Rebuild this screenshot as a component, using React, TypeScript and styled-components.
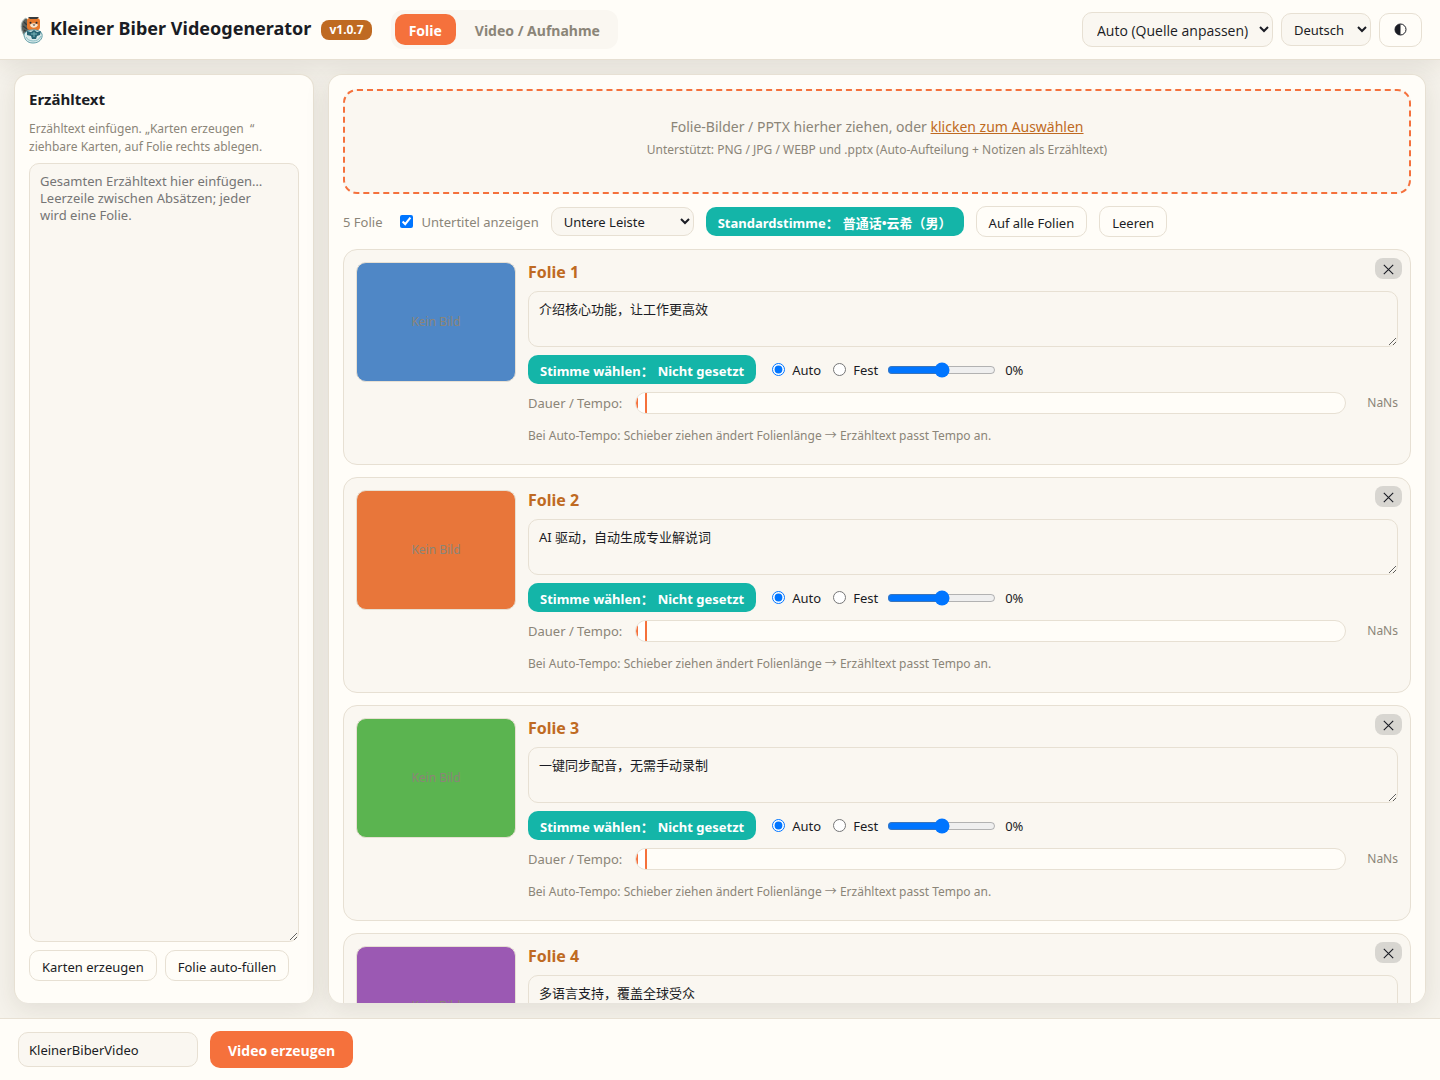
import React from "react";
import styled, { createGlobalStyle, css } from "styled-components";

const c = {
  page: "#f5f2eb",
  panel: "#fffdf8",
  soft: "#faf7f1",
  line: "#e7e0d3",
  text: "#1a1c24",
  muted: "#8b8578",
  brown: "#bf6a22",
  orange: "#f5713c",
  teal: "#14b5a8",
};

const Global = createGlobalStyle`
  *, *::before, *::after { box-sizing: border-box; }
  body {
    margin: 0;
    background: ${c.page};
    color: ${c.text};
    font: 13px/18px "Noto Sans", "Noto Sans CJK SC", sans-serif;
  }
  button, input, select, textarea { font: inherit; color: inherit; }
  h1, h2, h3, p { margin: 0; }
`;

const Page = styled.div`
  display: flex;
  flex-direction: column;
  height: 100vh;
`;

const Header = styled.header`
  display: flex;
  align-items: center;
  height: 60px;
  padding: 0 18px;
  background: ${c.panel};
  border-bottom: 1px solid ${c.line};
  box-shadow: 0 6px 24px rgba(60, 50, 30, 0.1);
`;

const Brand = styled.h1`
  display: flex;
  align-items: center;
  gap: 4px;
  font-size: 18px;
  font-weight: 700;
  line-height: 24px;
  white-space: nowrap;
  span { padding-bottom: 3px; }
`;

const Version = styled.span`
  margin-left: 10px;
  padding: 0 8px;
  border-radius: 8px;
  background: ${c.brown};
  color: #fff;
  font-size: 12px;
  font-weight: 700;
  line-height: 20px;
`;

const Tabs = styled.nav`
  display: flex;
  margin-left: 19px;
  padding: 4px;
  gap: 5px;
  border-radius: 12px;
  background: ${c.soft};
`;

const Tab = styled.button<{ $active?: boolean }>`
  height: 31px;
  padding: 2px 14px 0;
  border: 0;
  border-radius: 10px;
  font-size: 14px;
  font-weight: 700;
  background: ${(p) => (p.$active ? c.orange : "transparent")};
  color: ${(p) => (p.$active ? "#fff" : c.muted)};
`;

const HeaderActions = styled.div`
  display: flex;
  align-items: center;
  gap: 8px;
  margin-left: auto;
`;

const Select = styled.select<{ $h: number; $w: number }>`
  width: ${(p) => p.$w}px;
  height: ${(p) => p.$h}px;
  padding: 1px 0 0 8px;
  border: 1px solid ${c.line};
  border-radius: 10px;
  background: ${c.soft};
`;

const FormatSelect = styled(Select)`
  padding-left: 10px;
  font-family: "Open Sans", sans-serif;
  font-size: 14px;
`;

const outline = css`
  border: 1px solid ${c.line};
  border-radius: 10px;
  background: ${c.panel};
`;

const Button = styled.button`
  ${outline}
  height: 31px;
  padding: 2px 12px 0;
  white-space: nowrap;
`;

const ThemeButton = styled.button`
  ${outline}
  display: grid;
  place-items: center;
  width: 43px;
  height: 34px;
  padding: 0;
`;

const Main = styled.main`
  display: grid;
  grid-template-columns: 300px minmax(0, 1fr);
  gap: 14px;
  flex: 1;
  min-height: 0;
  padding: 14px 14px 15px;
`;

const Panel = styled.section`
  display: flex;
  flex-direction: column;
  min-height: 0;
  padding: 14px;
  border: 1px solid ${c.line};
  border-bottom: 0;
  border-radius: 14px;
  background: ${c.panel};
  box-shadow: 0 6px 24px rgba(60, 50, 30, 0.1);
`;

const DeckPanel = styled(Panel)`
  gap: 12px;
  overflow-y: auto;
  scrollbar-width: none;
`;

const PanelTitle = styled.h2`
  font-size: 15px;
  font-weight: 700;
  line-height: 20px;
`;

const Hint = styled.p`
  color: ${c.muted};
  font-size: 12px;
  line-height: 18px;
`;

const PanelHint = styled(Hint)`
  margin: 11px 0 7px;
`;

const Area = styled.textarea`
  display: block;
  width: 100%;
  padding: 9px 10px;
  border: 1px solid ${c.line};
  border-radius: 10px;
  background: ${c.soft};
  line-height: 17px;
  resize: vertical;
  &::placeholder { color: #757575; }
`;

const Script = styled(Area)`
  flex: 1;
  resize: both;
`;

const SlideArea = styled(Area)`
  height: 56px;
`;

const ScriptActions = styled.div`
  display: flex;
  gap: 8px;
  padding: 8px 0;
`;

const Drop = styled.div`
  display: flex;
  flex-direction: column;
  align-items: center;
  flex: none;
  gap: 4px;
  padding: 25px 0 33px;
  border: 2px dashed ${c.orange};
  border-radius: 14px;
  background: ${c.soft};
  color: ${c.muted};
  font-size: 14px;
  line-height: 21px;
  a { color: ${c.brown}; text-decoration: underline; }
`;

const Toolbar = styled.div`
  display: flex;
  align-items: center;
  flex: none;
  gap: 12px;
  color: ${c.muted};
  ${Select}, ${Button} { color: ${c.text}; }
`;

const Check = styled.label`
  display: flex;
  align-items: center;
  gap: 8px;
  input { width: 13px; height: 13px; margin: 0 0 0 6px; }
`;

const VoiceButton = styled.button`
  display: flex;
  align-items: center;
  gap: 4px;
  height: 29px;
  padding: 2px 12px 0;
  border: 0;
  border-radius: 10px;
  background: ${c.teal};
  color: #fff;
  font-weight: 700;
  white-space: nowrap;
`;

const Card = styled.article`
  position: relative;
  display: flex;
  flex: none;
  gap: 12px;
  min-height: 216px;
  padding: 12px;
  border: 1px solid ${c.line};
  border-radius: 14px;
  background: ${c.soft};
`;

const Thumb = styled.div<{ $fill: string }>`
  display: grid;
  place-items: center;
  flex: none;
  width: 160px;
  height: 120px;
  border: 1px solid ${c.line};
  border-radius: 10px;
  background: ${(p) => p.$fill};
  color: ${c.muted};
  font-size: 12px;
`;

const CardBody = styled.div`
  display: flex;
  flex-direction: column;
  flex: 1;
  gap: 8px;
  min-width: 0;
`;

const CardTitle = styled.h3`
  color: ${c.brown};
  font-size: 16px;
  font-weight: 700;
  line-height: 21px;
`;

const Close = styled.button`
  position: absolute;
  top: 8px;
  right: 8px;
  display: grid;
  place-items: center;
  width: 27px;
  height: 21px;
  padding: 2px 0 0;
  border: 0;
  border-radius: 8px;
  background: #d8d6d1;
`;

const Row = styled.div`
  display: flex;
  align-items: center;
`;

const Modes = styled.div`
  display: flex;
  gap: 12px;
  margin: 0 9px 0 16px;
`;

const Radio = styled.label`
  display: flex;
  align-items: center;
  gap: 7px;
  input { width: 13px; height: 13px; margin: 0; }
`;

const Range = styled.input`
  width: 109px;
  height: 16px;
  margin: 0 9px 0 0;
`;

const TempoRow = styled(Row)`
  gap: 10px;
  color: ${c.muted};
`;

const TempoLabel = styled.span`
  min-width: 97px;
`;

const Track = styled.div`
  flex: 1;
  height: 22px;
  overflow: hidden;
  border: 1px solid ${c.line};
  border-radius: 11px;
  background: ${c.panel};
`;

const Handle = styled.div`
  width: 11px;
  height: 20px;
  border: solid ${c.orange};
  border-width: 0 2px;
  background: #fff;
`;

const Duration = styled.span`
  width: 42px;
  font-size: 12px;
  text-align: right;
`;

const TempoHint = styled(Hint)`
  margin-top: 5px;
`;

const Footer = styled.footer`
  display: flex;
  align-items: center;
  gap: 12px;
  height: 62px;
  padding: 0 18px;
  border-top: 1px solid ${c.line};
  background: ${c.panel};
`;

const NameInput = styled.input`
  width: 180px;
  height: 35px;
  padding: 0 10px;
  border: 1px solid ${c.line};
  border-radius: 10px;
  background: ${c.soft};
`;

const Primary = styled.button`
  height: 37px;
  padding: 2px 18px 0;
  border: 0;
  border-radius: 10px;
  background: ${c.orange};
  color: #fff;
  font-family: "Open Sans", sans-serif;
  font-size: 14px;
  font-weight: 700;
`;

const Logo = () => (
  <svg width="28" height="28" viewBox="0 0 28 28" aria-hidden="true">
    <path d="M8 2C4 4 2 9 4 15c1 4 4 7 7 8l2-16z" fill="#5d625e" stroke="#a9bab8" />
    <path d="M6 6l3 3M5 10l4 3M6 14l4 3" stroke="#343d3e" strokeWidth="1.3" />
    <path d="M9 5c0-3 3-4 6-4s7 1 7 4v6c0 3-3 4-6 4s-7-1-7-4z" fill="#e8792c" />
    <path d="M10 1h11l-2 2h-7z" fill="#363b3d" />
    <path d="M12 9c1-2 3-1 4-2 1 1 3 0 4 2-1 3-7 4-8 0z" fill="#f6e6d0" />
    <circle cx="12.5" cy="6.8" r="1" fill="#222d34" />
    <circle cx="18.5" cy="6.8" r="1" fill="#222d34" />
    <path d="M14.500 8.500h3l-1.500 1.600z" fill="#463229" />
    <path d="M6 18c2-5 16-6 18 0 1 5-3 9-9 9s-9-4-9-9z" fill="#dceaea" stroke="#5f9da7" />
    <path d="M9 15l4 1 3-2 3 2 4-1-1 4-3 1-1 3h-4l-1-3-4-1z" fill="#286574" />
    <path d="M13 18h6M16 16v5" stroke="#78b4b8" />
    <path d="M8 21c2 5 12 6 15-1" fill="none" stroke="#84bbc2" />
  </svg>
);

const slides = [
  { text: "介绍核心功能，让工作更高效", fill: "#4f87c6" },
  { text: "AI 驱动，自动生成专业解说词", fill: "#e8763a" },
  { text: "一键同步配音，无需手动录制", fill: "#5bb450" },
  { text: "多语言支持，覆盖全球受众", fill: "#9b59b3" },
];

function Voice({ label, value }: { label: string; value: string }) {
  return (
    <VoiceButton>
      <span>{label}：</span>
      <span>{value}</span>
    </VoiceButton>
  );
}

function Slide({ index, text, fill }: { index: number; text: string; fill: string }) {
  return (
    <Card>
      <Thumb $fill={fill}>Kein Bild</Thumb>
      <CardBody>
        <CardTitle>Folie {index}</CardTitle>
        <SlideArea aria-label={`Erzähltext Folie ${index}`} defaultValue={text} />
        <Row>
          <Voice label="Stimme wählen" value="Nicht gesetzt" />
          <Modes>
            <Radio><input type="radio" name={`tempo-${index}`} defaultChecked />Auto</Radio>
            <Radio><input type="radio" name={`tempo-${index}`} />Fest</Radio>
          </Modes>
          <Range type="range" min={-50} max={50} defaultValue={0} aria-label="Tempo" />
          <span>0%</span>
        </Row>
        <TempoRow>
          <TempoLabel>Dauer / Tempo:</TempoLabel>
          <Track><Handle /></Track>
          <Duration>NaNs</Duration>
        </TempoRow>
        <TempoHint>Bei Auto-Tempo: Schieber ziehen ändert Folienlänge → Erzähltext passt Tempo an.</TempoHint>
      </CardBody>
      <Close aria-label="Folie entfernen">
        <svg width="11" height="11" viewBox="0 0 11 11" stroke={c.text} strokeWidth="1.1">
          <path d="M.8.8l9.4 9.4M10.2.8L.8 10.2" />
        </svg>
      </Close>
    </Card>
  );
}

export default function App() {
  return (
    <>
      <Global />
      <Page>
        <Header>
          <Brand><Logo /><span>Kleiner Biber Videogenerator</span></Brand>
          <Version>v1.0.7</Version>
          <Tabs>
            <Tab $active>Folie</Tab>
            <Tab>Video / Aufnahme</Tab>
          </Tabs>
          <HeaderActions>
            <FormatSelect $w={191} $h={35} aria-label="Format"><option>Auto (Quelle anpassen)</option></FormatSelect>
            <Select $w={90} $h={33} aria-label="Sprache"><option>Deutsch</option></Select>
            <ThemeButton aria-label="Design wechseln">
              <svg width="13" height="13" viewBox="0 0 13 13">
                <circle cx="6.5" cy="6.5" r="5.5" fill="none" stroke={c.text} />
                <path d="M6.5 1a5.5 5.5 0 0 0 0 11z" fill={c.text} />
              </svg>
            </ThemeButton>
          </HeaderActions>
        </Header>
        <Main>
          <Panel>
            <PanelTitle>Erzähltext</PanelTitle>
            <PanelHint>Erzähltext einfügen. „Karten erzeugen&nbsp; “ ziehbare Karten, auf Folie rechts ablegen.</PanelHint>
            <Script
              aria-label="Erzähltext"
              placeholder={"Gesamten Erzähltext hier einfügen…\nLeerzeile zwischen Absätzen; jeder\nwird eine Folie."}
            />
            <ScriptActions>
              <Button>Karten erzeugen</Button>
              <Button>Folie auto-füllen</Button>
            </ScriptActions>
          </Panel>
          <DeckPanel>
            <Drop>
              <span>Folie-Bilder / PPTX hierher ziehen, oder <a href="#auswahl">klicken zum Auswählen</a></span>
              <Hint>Unterstützt: PNG / JPG / WEBP und .pptx (Auto-Aufteilung + Notizen als Erzähltext)</Hint>
            </Drop>
            <Toolbar>
              <span>5 Folie</span>
              <Check><input type="checkbox" defaultChecked />Untertitel anzeigen</Check>
              <Select $w={143} $h={29} aria-label="Untertitelposition"><option>Untere Leiste</option></Select>
              <Voice label="Standardstimme" value="普通话•云希（男）" />
              <Button>Auf alle Folien</Button>
              <Button>Leeren</Button>
            </Toolbar>
            {slides.map((s, i) => <Slide key={s.fill} index={i + 1} {...s} />)}
          </DeckPanel>
        </Main>
        <Footer>
          <NameInput aria-label="Dateiname" defaultValue="KleinerBiberVideo" />
          <Primary>Video erzeugen</Primary>
        </Footer>
      </Page>
    </>
  );
}
